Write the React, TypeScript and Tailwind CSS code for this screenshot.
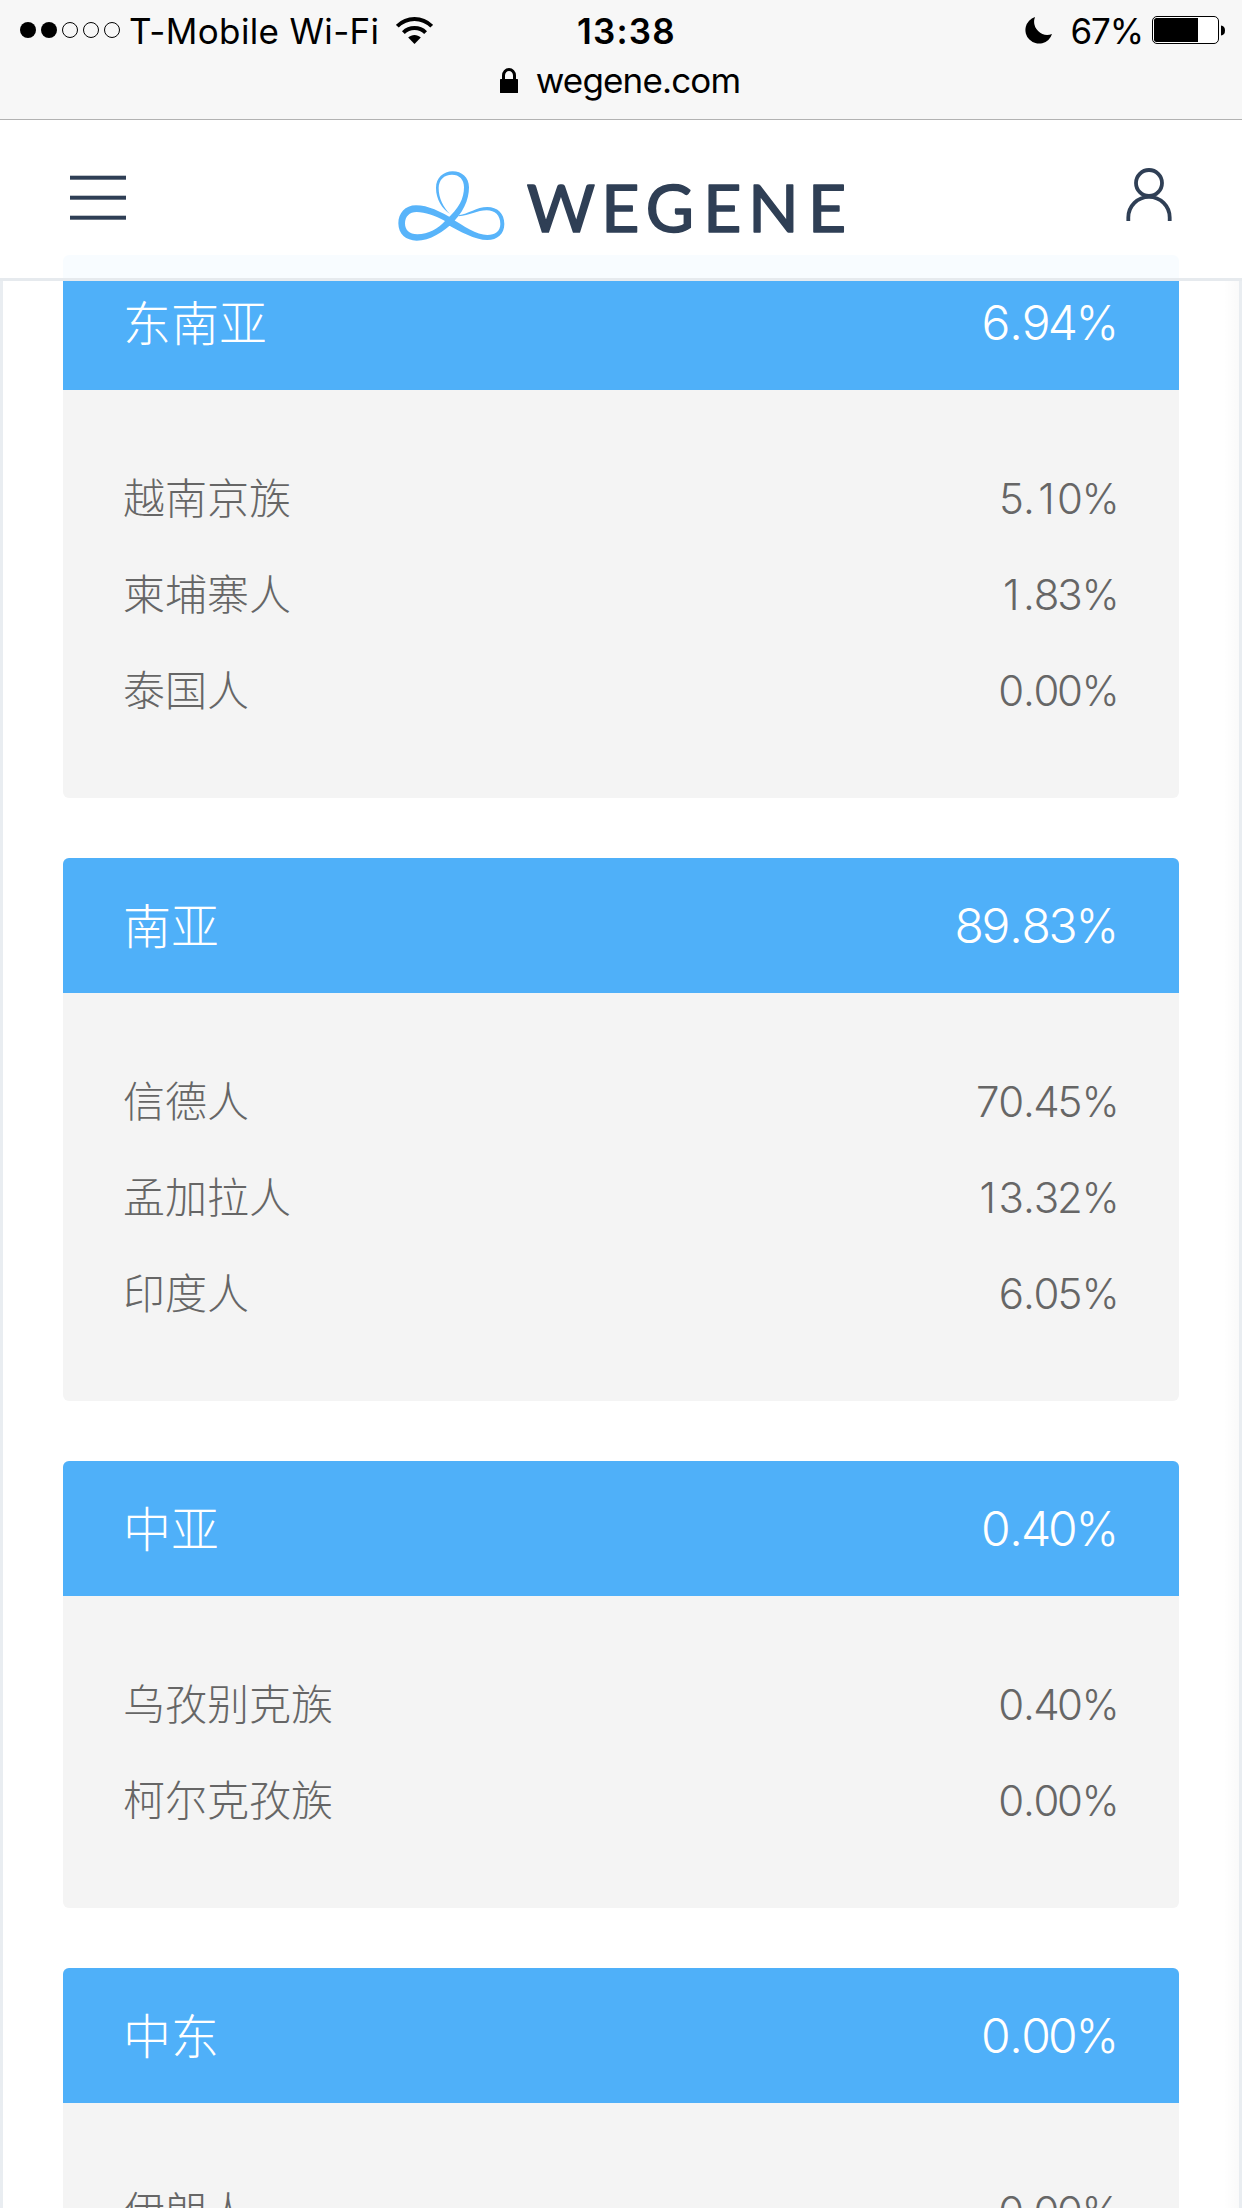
const regions = [
  {
    name: "东南亚",
    value: "6.94",
    groups: [
      { name: "越南京族", value: "5.10" },
      { name: "柬埔寨人", value: "1.83" },
      { name: "泰国人", value: "0.00" },
    ],
  },
  {
    name: "南亚",
    value: "89.83",
    groups: [
      { name: "信德人", value: "70.45" },
      { name: "孟加拉人", value: "13.32" },
      { name: "印度人", value: "6.05" },
    ],
  },
  {
    name: "中亚",
    value: "0.40",
    groups: [
      { name: "乌孜别克族", value: "0.40" },
      { name: "柯尔克孜族", value: "0.00" },
    ],
  },
  {
    name: "中东",
    value: "0.00",
    groups: [{ name: "伊朗人", value: "0.00" }],
  },
]

function StatusBar() {
  return (
    <div className="h-[120px] border-b border-[#b2b2b2] bg-[#f7f7f7] text-black font-['Inter',sans-serif] text-[35px]">
      <div className="grid grid-cols-3 h-[60px] pl-5 pr-[17px]">
        <div className="flex items-center">
          <svg className="w-[100px] h-4 shrink-0" viewBox="0 0 100 16">
            <circle cx="8" cy="8" r="8" />
            <circle cx="29" cy="8" r="8" />
            <g fill="none" stroke="#000" strokeWidth="1">
              <circle cx="50" cy="8" r="7.5" />
              <circle cx="71" cy="8" r="7.5" />
              <circle cx="92" cy="8" r="7.5" />
            </g>
          </svg>
          <span className="ml-[9px] mt-[3px] w-[250px] whitespace-nowrap tracking-[0.35px]">T-Mobile Wi-Fi</span>
          <svg className="ml-[17px] w-[37px] h-[27px] shrink-0" viewBox="0 0 37 27">
            <g fill="none" stroke="#000" strokeWidth="4">
              <path d="M1.3 9.2C11 -0.4 26 -0.4 35.7 9.2" />
              <path d="M7.4 15.6C13.5 9.6 23.5 9.6 29.6 15.6" />
            </g>
            <path d="M18.5 27L12.2 20.6C15.7 17.2 21.3 17.2 24.8 20.6Z" />
          </svg>
        </div>
        <div className="flex items-center justify-center">
          <span className="mt-[3px] ml-[8px] font-semibold tracking-[1.2px]">13:38</span>
        </div>
        <div className="flex items-center justify-end">
          <svg className="w-[27px] h-[27px]" viewBox="0 0 27 27">
            <path d="M10 0A13.6 13.6 0 1 0 27 17A13.3 13.3 0 0 1 10 0Z" />
          </svg>
          <span className="ml-[18px] mt-[3px] tracking-[-1.1px]">67%</span>
          <svg className="ml-[9px] w-[73px] h-7" viewBox="0 0 73 28">
            <rect x="0.5" y="0.5" width="66" height="27" rx="4.5" fill="#fff" stroke="#000" />
            <path d="M4.5 2H46V26H4.5Q2 26 2 23.5V4.5Q2 2 4.5 2Z" />
            <path d="M69 9.5Q73 10 73 14.5T69 19.5Z" />
          </svg>
        </div>
      </div>
      <div className="flex justify-center items-center h-[41px] pr-[2px]">
        <svg className="w-[18px] h-[25px]" viewBox="0 0 18 25">
          <path d="M3.5 12V7.5A5.5 6 0 0 1 14.5 7.5V12" fill="none" stroke="#000" strokeWidth="3" />
          <rect y="11" width="18" height="14" rx="0.5" />
        </svg>
        <span className="ml-[18px] tracking-[-0.85px]">wegene.com</span>
      </div>
    </div>
  )
}

function Logo() {
  return (
    <svg className="w-[480px] h-[110px]" viewBox="0 0 1440 330">
      <g fill="#58b4fa" fillRule="evenodd">
        <path d="M222 208C180 185 145 166 108 166C75 166 55 190 55 220C55 252 78 272 110 272C150 272 190 245 222 215ZM195 213C165 197 135 186 110 186C88 186 75 200 75 220C75 240 88 253 112 253C145 253 175 235 195 213Z" />
        <path d="M208 228C250 190 267 150 267 112C267 82 245 64 218 64C190 64 168 84 168 114C168 148 186 176 210 192C190 172 176 145 176 114C176 90 192 74 216 74C238 74 252 88 252 112C252 145 238 175 196 212Z" />
        <path d="M236 196C265 192 290 171 322 171C352 171 373 190 373 222C373 252 352 270 322 270C285 270 240 245 200 222L214 205C250 228 290 255 322 255C345 255 361 244 361 222C361 196 345 181 320 181C292 181 268 196 236 199Z" />
      </g>
      <text
        x="440 664 797 970 1105 1284"
        y="245"
        fill="#2f3f55"
        stroke="#2f3f55"
        strokeWidth="5"
        strokeLinejoin="round"
        className="font-['Lato',sans-serif] font-normal text-[198px]"
      >
        WEGENE
      </text>
    </svg>
  )
}

function Navbar() {
  return (
    <div className="flex items-start justify-between h-[161px] border-b-3 border-[#e3e8ec]/90 bg-white/96">
      <svg className="ml-[70px] mt-[55px] w-14 h-[46px]" viewBox="0 0 56 46" fill="#2f3f55">
        <rect y="0.7" width="56" height="4" />
        <rect y="20.7" width="56" height="4" />
        <rect y="40.7" width="56" height="4" />
      </svg>
      <div className="mr-[11px] mt-[30px]">
        <Logo />
      </div>
      <svg className="mr-[69px] mt-[47px] w-[48px] h-[54px]" viewBox="0 0 48 54" fill="none" stroke="#2f3f55" strokeWidth="3.8">
        <circle cx="24" cy="16" r="13" />
        <path d="M3.3 54V50.5A20.7 20.7 0 0 1 44.7 50.5V54" />
      </svg>
    </div>
  )
}

// Every digit takes the same width, so the columns of figures line up
function Percent({ value }: { value: string }) {
  return (
    <span className="flex font-['Inter',sans-serif] font-light">
      {[...value].map((char, i) => (
        <span key={i} className={char === "." ? "w-[0.278em] flex justify-center" : "w-[0.559em] flex justify-center"}>
          {char}
        </span>
      ))}
      <span className="w-[0.889em] flex justify-center scale-x-96">%</span>
    </span>
  )
}

export default function App() {
  return (
    <div className="relative w-[1242px] h-[2208px] overflow-hidden bg-white font-['Noto_Sans_CJK_SC',sans-serif]">
      <div className="h-full border-x-3 border-[#e9edf1] px-[60px] pt-[255px] flex flex-col gap-[60px]">
        {regions.map((region) => (
          <div key={region.name} className="shrink-0 rounded-md overflow-hidden bg-[#f4f4f4]">
            <div className="flex items-center justify-between h-[135px] px-[60px] bg-[#4fb0f9] text-white text-[48px] leading-none font-light">
              <span className="pb-[6px]">{region.name}</span>
              <Percent value={region.value} />
            </div>
            <div className="py-[60px] px-[60px] text-[#666] text-[42px] leading-none font-light">
              {region.groups.map((group) => (
                <div key={group.name} className="flex items-center justify-between h-24">
                  <span className="pb-[4px]">{group.name}</span>
                  <div className="pt-[2px]">
                    <Percent value={group.value} />
                  </div>
                </div>
              ))}
            </div>
          </div>
        ))}
      </div>

      {/* Soft shade along the right edge */}
      <div className="absolute right-[3px] top-[120px] bottom-0 w-4 bg-gradient-to-r from-transparent to-black/2" />

      <div className="absolute inset-x-0 top-0">
        <StatusBar />
        <Navbar />
      </div>
    </div>
  )
}
